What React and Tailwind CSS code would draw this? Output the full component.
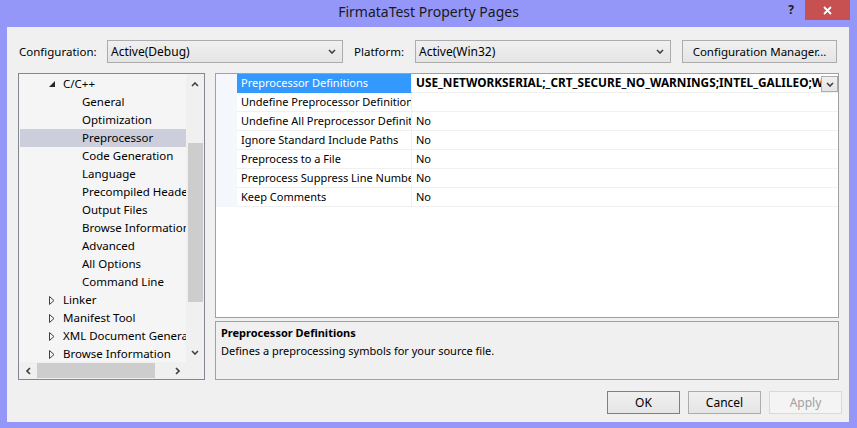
import React from "react";

const Chevron = ({ dir = "down", className = "" }) => {
  const pts = {
    down: "1,1 4,4 7,1",
    up: "1,4 4,1 7,4",
  }[dir];
  return (
    <svg width="8" height="5" viewBox="0 0 8 5" className={className}>
      <polyline points={pts} fill="none" stroke="#404040" strokeWidth="1.6" />
    </svg>
  );
};

const HChevron = ({ dir = "left" }) => {
  const pts = dir === "left" ? "4,1 1,4 4,7" : "1,1 4,4 1,7";
  return (
    <svg width="5" height="8" viewBox="0 0 5 8">
      <polyline points={pts} fill="none" stroke="#404040" strokeWidth="1.6" />
    </svg>
  );
};

const Expanded = () => (
  <svg width="6" height="6" viewBox="0 0 6 6">
    <polygon points="6,0 6,6 0,6" fill="#262626" />
  </svg>
);

const Collapsed = () => (
  <svg width="6" height="9" viewBox="0 0 6 9">
    <polygon points="0.5,0.5 5,4.5 0.5,8.5" fill="none" stroke="#404040" strokeWidth="1" />
  </svg>
);

const Combo = ({ text, w }) => (
  <div
    className={`${w} h-[23px] border border-[#acacac] bg-gradient-to-b from-[#f0f0f0] to-[#e5e5e5] flex items-center pl-[3px] pr-[6px]`}
  >
    <span className="flex-1">{text}</span>
    <Chevron />
  </div>
);

const Btn = ({ children, variant }) => {
  const cls =
    variant === "default"
      ? "border-[#3c8fe0] bg-gradient-to-b from-[#f0f0f0] to-[#e5e5e5] text-black"
      : variant === "disabled"
      ? "border-[#d9d9d9] bg-[#f4f4f4] text-[#a0a0a0]"
      : "border-[#acacac] bg-gradient-to-b from-[#f0f0f0] to-[#e5e5e5] text-black";
  return (
    <div className={`w-[73px] h-[23px] border ${cls} flex items-center justify-center text-[12px]`}>
      {children}
    </div>
  );
};

const treeRows = [
  { t: "C/C++", lvl: 0, icon: "exp" },
  { t: "General", lvl: 1 },
  { t: "Optimization", lvl: 1 },
  { t: "Preprocessor", lvl: 1, sel: true },
  { t: "Code Generation", lvl: 1 },
  { t: "Language", lvl: 1 },
  { t: "Precompiled Headers", lvl: 1 },
  { t: "Output Files", lvl: 1 },
  { t: "Browse Information", lvl: 1 },
  { t: "Advanced", lvl: 1 },
  { t: "All Options", lvl: 1 },
  { t: "Command Line", lvl: 1 },
  { t: "Linker", lvl: 0, icon: "col" },
  { t: "Manifest Tool", lvl: 0, icon: "col" },
  { t: "XML Document Generator", lvl: 0, icon: "col" },
  { t: "Browse Information", lvl: 0, icon: "col" },
];

const props = [
  { n: "Preprocessor Definitions", v: "USE_NETWORKSERIAL;_CRT_SECURE_NO_WARNINGS;INTEL_GALILEO;WIN32;_DEBUG;_CONSOLE;%(PreprocessorDefinitions)", sel: true },
  { n: "Undefine Preprocessor Definitions", v: "" },
  { n: "Undefine All Preprocessor Definitions", v: "No" },
  { n: "Ignore Standard Include Paths", v: "No" },
  { n: "Preprocess to a File", v: "No" },
  { n: "Preprocess Suppress Line Numbers", v: "No" },
  { n: "Keep Comments", v: "No" },
];

export default function App() {
  return (
    <div className="w-[857px] h-[428px] bg-[#9497f7] flex flex-col font-['Noto_Sans',sans-serif] text-[11px] text-black overflow-hidden">
      {/* Title bar */}
      <div className="h-[27px] flex">
        <div className="flex-1" />
        <div className="pt-[3px] text-[14px] text-[#1a1a1a] leading-[18px]">FirmataTest Property Pages</div>
        <div className="flex-1 flex justify-end items-start">
          <div className="w-[28px] h-[20px] flex items-center justify-center font-bold text-[12px] text-[#1a1a1a]">?</div>
          <div className="w-[45px] h-[20px] bg-[#c75050] flex items-center justify-center mr-[7px]">
            <svg width="9" height="9" viewBox="0 0 9 9">
              <path d="M1 1 L8 8 M8 1 L1 8" stroke="#fff" strokeWidth="1.8" />
            </svg>
          </div>
        </div>
      </div>

      {/* Client area */}
      <div className="ml-[7px] mr-[8px] h-[395px] bg-[#f0f0f0] flex flex-col pl-[11px] pr-[10px] pt-[13px]">
        {/* Top row */}
        <div className="h-[23px] flex items-center text-[12px]">
          <div className="w-[89px] pl-[1px] text-[11.5px]">Configuration:</div>
          <Combo text="Active(Debug)" w="w-[236px]" />
          <div className="w-[61px] ml-[11px] text-[11.5px]">Platform:</div>
          <Combo text="Active(Win32)" w="w-[256px]" />
          <div className="ml-[11px] w-[155px] h-[23px] border border-[#acacac] bg-gradient-to-b from-[#f0f0f0] to-[#e5e5e5] flex items-center justify-center text-[11.5px]">
            Configuration Manager...
          </div>
        </div>

        {/* Main */}
        <div className="mt-[10px] h-[307px] flex gap-[10px]">
          {/* Tree */}
          <div className="w-[187px] h-full border border-[#828790] bg-[#f5f5f5] flex flex-col">
            <div className="h-[288px] flex">
              <div className="w-[167px] pt-[1px] pl-[1px] overflow-hidden">
                {treeRows.map((r, i) => (
                  <div
                    key={i}
                    className={`h-[18px] flex items-center whitespace-nowrap ${r.sel ? "bg-[#cccedb]" : ""} ${r.lvl === 0 ? "pl-[29px]" : "pl-[62px]"}`}
                  >
                    {r.icon === "exp" && (
                      <span className="w-[14px] shrink-0 flex items-center"><Expanded /></span>
                    )}
                    {r.icon === "col" && (
                      <span className="w-[14px] shrink-0 flex items-center"><Collapsed /></span>
                    )}
                    <span className="text-[11.5px]">{r.t}</span>
                  </div>
                ))}
              </div>
              <div className="w-[18px] bg-[#f0f0f0] flex flex-col items-center">
                <div className="h-[20px] flex items-center justify-center"><Chevron dir="up" /></div>
                <div className="mt-[49px] w-[15px] h-[159px] bg-[#cdcdcd]" />
                <div className="flex-1" />
                <div className="h-[20px] flex items-center justify-center"><Chevron dir="down" /></div>
              </div>
            </div>
            <div className="h-[17px] flex bg-[#f0f0f0]">
              <div className="w-[18px] flex items-center justify-center"><HChevron dir="left" /></div>
              <div className="flex-1 flex items-center">
                <div className="w-[118px] h-[15px] bg-[#cdcdcd]" />
              </div>
              <div className="w-[18px] flex items-center justify-center"><HChevron dir="right" /></div>
              <div className="w-[18px] bg-[#f0f0f0]" />
            </div>
          </div>

          {/* Right column */}
          <div className="w-[624px] flex flex-col">
            <div className="h-[245px] border border-[#a0a0a0] bg-white">
              {props.map((p, i) => (
                <div key={i} className="h-[19px] flex">
                  <div className="w-[21px] bg-[#f4f7fc]" />
                  <div
                    className={`w-[175px] pl-[4px] flex items-center whitespace-nowrap overflow-hidden border-r border-b ${p.sel ? "bg-[#3399ff] text-white border-[#3399ff] border-r-[#f0f0f0]" : "border-[#f0f0f0]"}`}
                  >
                    {p.n}
                  </div>
                  <div className="flex-1 min-w-0 flex items-center border-b border-[#f0f0f0]">
                    <span className={`flex-1 min-w-0 pl-[4px] whitespace-nowrap overflow-hidden ${p.sel ? "font-bold text-[11.8px]" : ""}`}>
                      {p.v}
                    </span>
                    {p.sel && (
                      <div className="w-[17px] h-[16px] border border-[#acacac] bg-gradient-to-b from-[#f0f0f0] to-[#e5e5e5] flex items-center justify-center mb-[-2px]">
                        <Chevron />
                      </div>
                    )}
                  </div>
                </div>
              ))}
            </div>
            <div className="mt-[3px] h-[59px] border border-[#a0a0a0] bg-[#f0f0f0] px-[5px] pt-[2px] leading-[18px]">
              <div className="font-bold">Preprocessor Definitions</div>
              <div>Defines a preprocessing symbols for your source file.</div>
            </div>
          </div>
        </div>

        {/* Buttons */}
        <div className="mt-[11px] h-[23px] flex justify-end gap-[8px] mr-[-3px]">
          <Btn variant="default">OK</Btn>
          <Btn>Cancel</Btn>
          <Btn variant="disabled">Apply</Btn>
        </div>
      </div>
    </div>
  );
}
